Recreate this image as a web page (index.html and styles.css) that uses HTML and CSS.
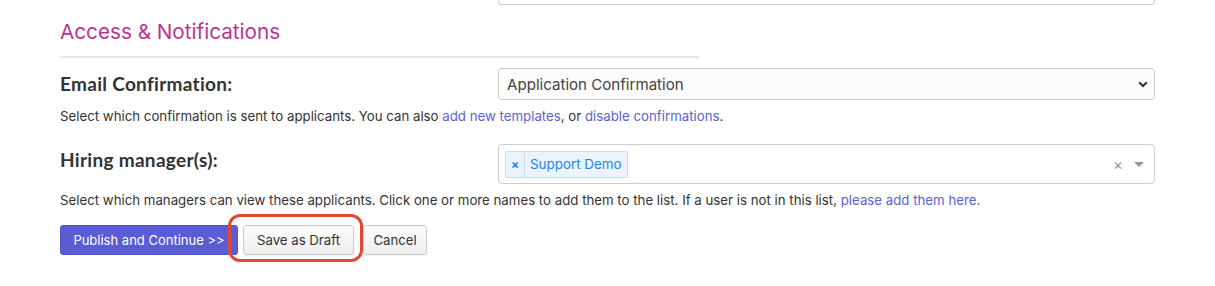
FILE: index.html
```html
<!DOCTYPE html>
<html>
<head>
    <meta charset="UTF-8">
    <title>Access &amp; Notifications</title>
    <link rel="stylesheet" href="styles.css">
</head>
<body>
    <div class="form">
        <!-- previous field, only its bottom edge shows -->
        <div class="row">
            <div></div>
            <div class="prev-field"></div>
        </div>

        <h2 class="section-title">Access &amp; Notifications</h2>
        <div class="section-rule"></div>

        <!-- Email confirmation -->
        <div class="row first">
            <label class="label">Email Confirmation:</label>
            <div class="select">
                <span>Application Confirmation</span>
                <svg class="chevron" width="10" height="7" viewBox="0 0 10 7">
                    <path d="M1.2 1.3 L5 5 L8.8 1.3" fill="none" stroke="#333" stroke-width="2"/>
                </svg>
            </div>
        </div>
        <p class="help">Select which confirmation is sent to applicants. You can also <a href="#">add new templates</a>, or <a href="#">disable confirmations</a>.</p>

        <!-- Hiring managers -->
        <div class="row">
            <label class="label">Hiring manager(s):</label>
            <div class="multi">
                <span class="tag">
                    <span class="tag-x">×</span>
                    <span class="tag-text">Support Demo</span>
                </span>
                <span class="multi-clear">×</span>
                <span class="multi-arrow"></span>
            </div>
        </div>
        <p class="help">Select which managers can view these applicants. Click one or more names to add them to the list. If a user is not in this list, <a href="#">please add them here.</a></p>

        <div class="actions">
            <button class="btn btn-primary">Publish and Continue &gt;&gt;</button>
            <span class="highlight">
                <button class="btn btn-default">Save as Draft</button>
            </span>
            <button class="btn btn-default">Cancel</button>
        </div>
    </div>
</body>
</html>
```

FILE: styles.css
```css
* {
    margin: 0;
    padding: 0;
    box-sizing: border-box;
}

body {
    font-family: Inter, "Liberation Sans", sans-serif;
    background: #fff;
    color: #333;
    width: 1215px;
    height: 286px;
    overflow: hidden;
}

.form {
    width: 1095px;
    margin-left: 60px;
}

.row {
    display: grid;
    grid-template-columns: 438px 1fr;
    align-items: start;
}

.row.first {
    margin-top: 10px;
}

.prev-field {
    height: 5px;
    border: 1px solid #ccc;
    border-top: none;
    border-radius: 0 0 4px 4px;
}

.section-title {
    font-size: 20.7px;
    font-weight: 400;
    line-height: 28px;
    color: #b8358f;
    margin-top: 13px;
}

.section-rule {
    width: 639px;
    border-top: 2px solid #e6e6e6;
    margin-top: 10px;
}

.label {
    font-family: Lato, "Liberation Sans", sans-serif;
    font-size: 19px;
    font-weight: 700;
    line-height: 32px;
    letter-spacing: 0.3px;
    color: #333;
}

.select {
    height: 32px;
    border: 1px solid #ccc;
    border-radius: 4px;
    background: #fcfcfc;
    display: flex;
    align-items: center;
    justify-content: space-between;
    padding: 0 6px 0 8px;
    font-size: 15.1px;
    color: #444;
}

.chevron {
    display: block;
}

.help {
    font-size: 13.25px;
    line-height: 18px;
    margin: 7px 0 19px;
    color: #333;
}

.help a {
    color: #5b5fd6;
    text-decoration: none;
}

.multi {
    height: 40px;
    border: 1px solid #ccc;
    border-radius: 4px;
    display: flex;
    align-items: center;
    padding: 0 10px 0 6px;
}

.tag {
    display: flex;
    height: 27px;
    background: #ebf4fe;
    border: 1px solid #c4ddf6;
    border-radius: 2px;
    color: #1d86e6;
    font-size: 13.4px;
    align-items: stretch;
}

.tag-x {
    width: 19px;
    border-right: 1px solid #c4ddf6;
    display: flex;
    align-items: center;
    justify-content: center;
    font-size: 12px;
    font-weight: 700;
}

.tag-text {
    display: flex;
    align-items: center;
    padding: 0 5px 0 5px;
}

.multi-clear {
    margin-left: auto;
    color: #999;
    font-size: 15px;
    line-height: 1;
}

.multi-arrow {
    margin-left: 11px;
    width: 0;
    height: 0;
    border-left: 5px solid transparent;
    border-right: 5px solid transparent;
    border-top: 5px solid #999;
}

.actions {
    display: flex;
    align-items: center;
    margin-top: -3px;
}

.btn {
    height: 30px;
    border-radius: 3px;
    font-family: Inter, "Liberation Sans", sans-serif;
    font-size: 13.2px;
    cursor: pointer;
}

.btn-primary {
    width: 178px;
    background: #5b5bd6;
    border: 1px solid #5454cf;
    color: #fff;
    font-size: 13px;
}

.btn-default {
    background: linear-gradient(#fdfdfd, #eeeeee);
    border: 1px solid #ccc;
    color: #333;
    padding: 0 12px;
    box-shadow: 0 1px 1px rgba(0, 0, 0, 0.06);
}

.highlight {
    position: relative;
    margin: 0 9px 0 5px;
    display: flex;
}

.highlight .btn {
    width: 111px;
}

.highlight::after {
    content: "";
    position: absolute;
    left: -15px;
    right: -9px;
    top: -11px;
    bottom: -7px;
    border: 3px solid #e04a33;
    border-radius: 12px;
}

.actions > .btn-default {
    width: 64px;
    padding: 0;
}
```
